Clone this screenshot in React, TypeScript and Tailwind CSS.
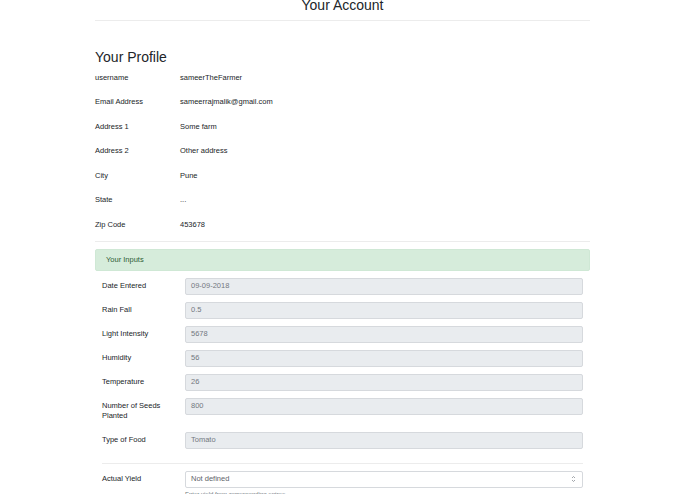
import React from 'react';

const profile: [string, string][] = [
  ['username', 'sameerTheFarmer'],
  ['Email Address', 'sameerrajmalik@gmail.com'],
  ['Address 1', 'Some farm'],
  ['Address 2', 'Other address'],
  ['City', 'Pune'],
  ['State', '...'],
  ['Zip Code', '453678'],
];

const inputs: [string, string][] = [
  ['Date Entered', '09-09-2018'],
  ['Rain Fall', '0.5'],
  ['Light Intensity', '5678'],
  ['Humidity', '56'],
  ['Temperature', '26'],
  ['Number of Seeds Planted', '800'],
  ['Type of Food', 'Tomato'],
];

const InputRow: React.FC<{ label: string; value: string }> = ({ label, value }) => (
  <div className="mb-[7px] flex items-start">
    <label className="w-[83px] shrink-0 pr-[8px] pt-[3px] pb-[3px] text-[7.5px] leading-[10.5px]">
      {label}
    </label>
    <div className="flex h-[17px] flex-1 items-center rounded-[2px] border border-[#d6d9dd] bg-[#e9ecef] px-[5px] text-[7.5px] text-[#737880]">
      {value}
    </div>
  </div>
);

export default function App() {
  return (
    <div className="min-h-screen overflow-hidden bg-white font-['Liberation_Sans',Arial,sans-serif] text-[#212529]">
      <div className="ml-[95px] w-[495px]">
        <h1 className="-mt-[3px] text-center text-[14px] leading-[17px]">Your Account</h1>
        <div className="mt-[6px] border-t border-[#ececec]" />

        {/* Profile */}
        <h2 className="mt-[29px] text-[14px] leading-[15px]">Your Profile</h2>
        <div className="flex flex-col">
          {profile.map(([label, value]) => (
            <div key={label} className="flex h-[24.5px] items-center text-[7.5px]">
              <span className="w-[85px] shrink-0">{label}</span>
              <span>{value}</span>
            </div>
          ))}
        </div>
        <div className="mt-[4px] border-t border-[#ececec]" />

        {/* Inputs */}
        <div className="mt-[7px] flex h-[22px] items-center rounded-[2px] border border-[#cfe8d5] bg-[#d6ecdb] px-[10px] text-[7.5px] text-[#2d5d36]">
          Your Inputs
        </div>
        <div className="px-[7px] pt-[7px]">
          {inputs.map(([label, value]) => (
            <InputRow key={label} label={label} value={value} />
          ))}
          <div className="mt-[14px] border-t border-[#ececec]" />
          <div className="mt-[7px] flex items-start">
            <label className="w-[83px] shrink-0 pt-[3px] text-[7.5px] leading-[10.5px]">Actual Yield</label>
            <div className="flex-1">
              <div className="flex h-[17px] items-center justify-between rounded-[2px] border border-[#d6d9dd] bg-white pl-[5px] pr-[6px] text-[7.5px] text-[#5f646b]">
                <span>Not defined</span>
                <svg width="5" height="8" viewBox="0 0 5 8" fill="none" stroke="#8a8f96" strokeWidth="0.8">
                  <path d="M1 3 L2.5 1.5 L4 3" />
                  <path d="M1 5 L2.5 6.5 L4 5" />
                </svg>
              </div>
              <p className="mt-[2px] text-[6px] leading-[8px] text-[#6c757d]">Enter yield from corresponding entree</p>
            </div>
          </div>
        </div>
      </div>
    </div>
  );
}
